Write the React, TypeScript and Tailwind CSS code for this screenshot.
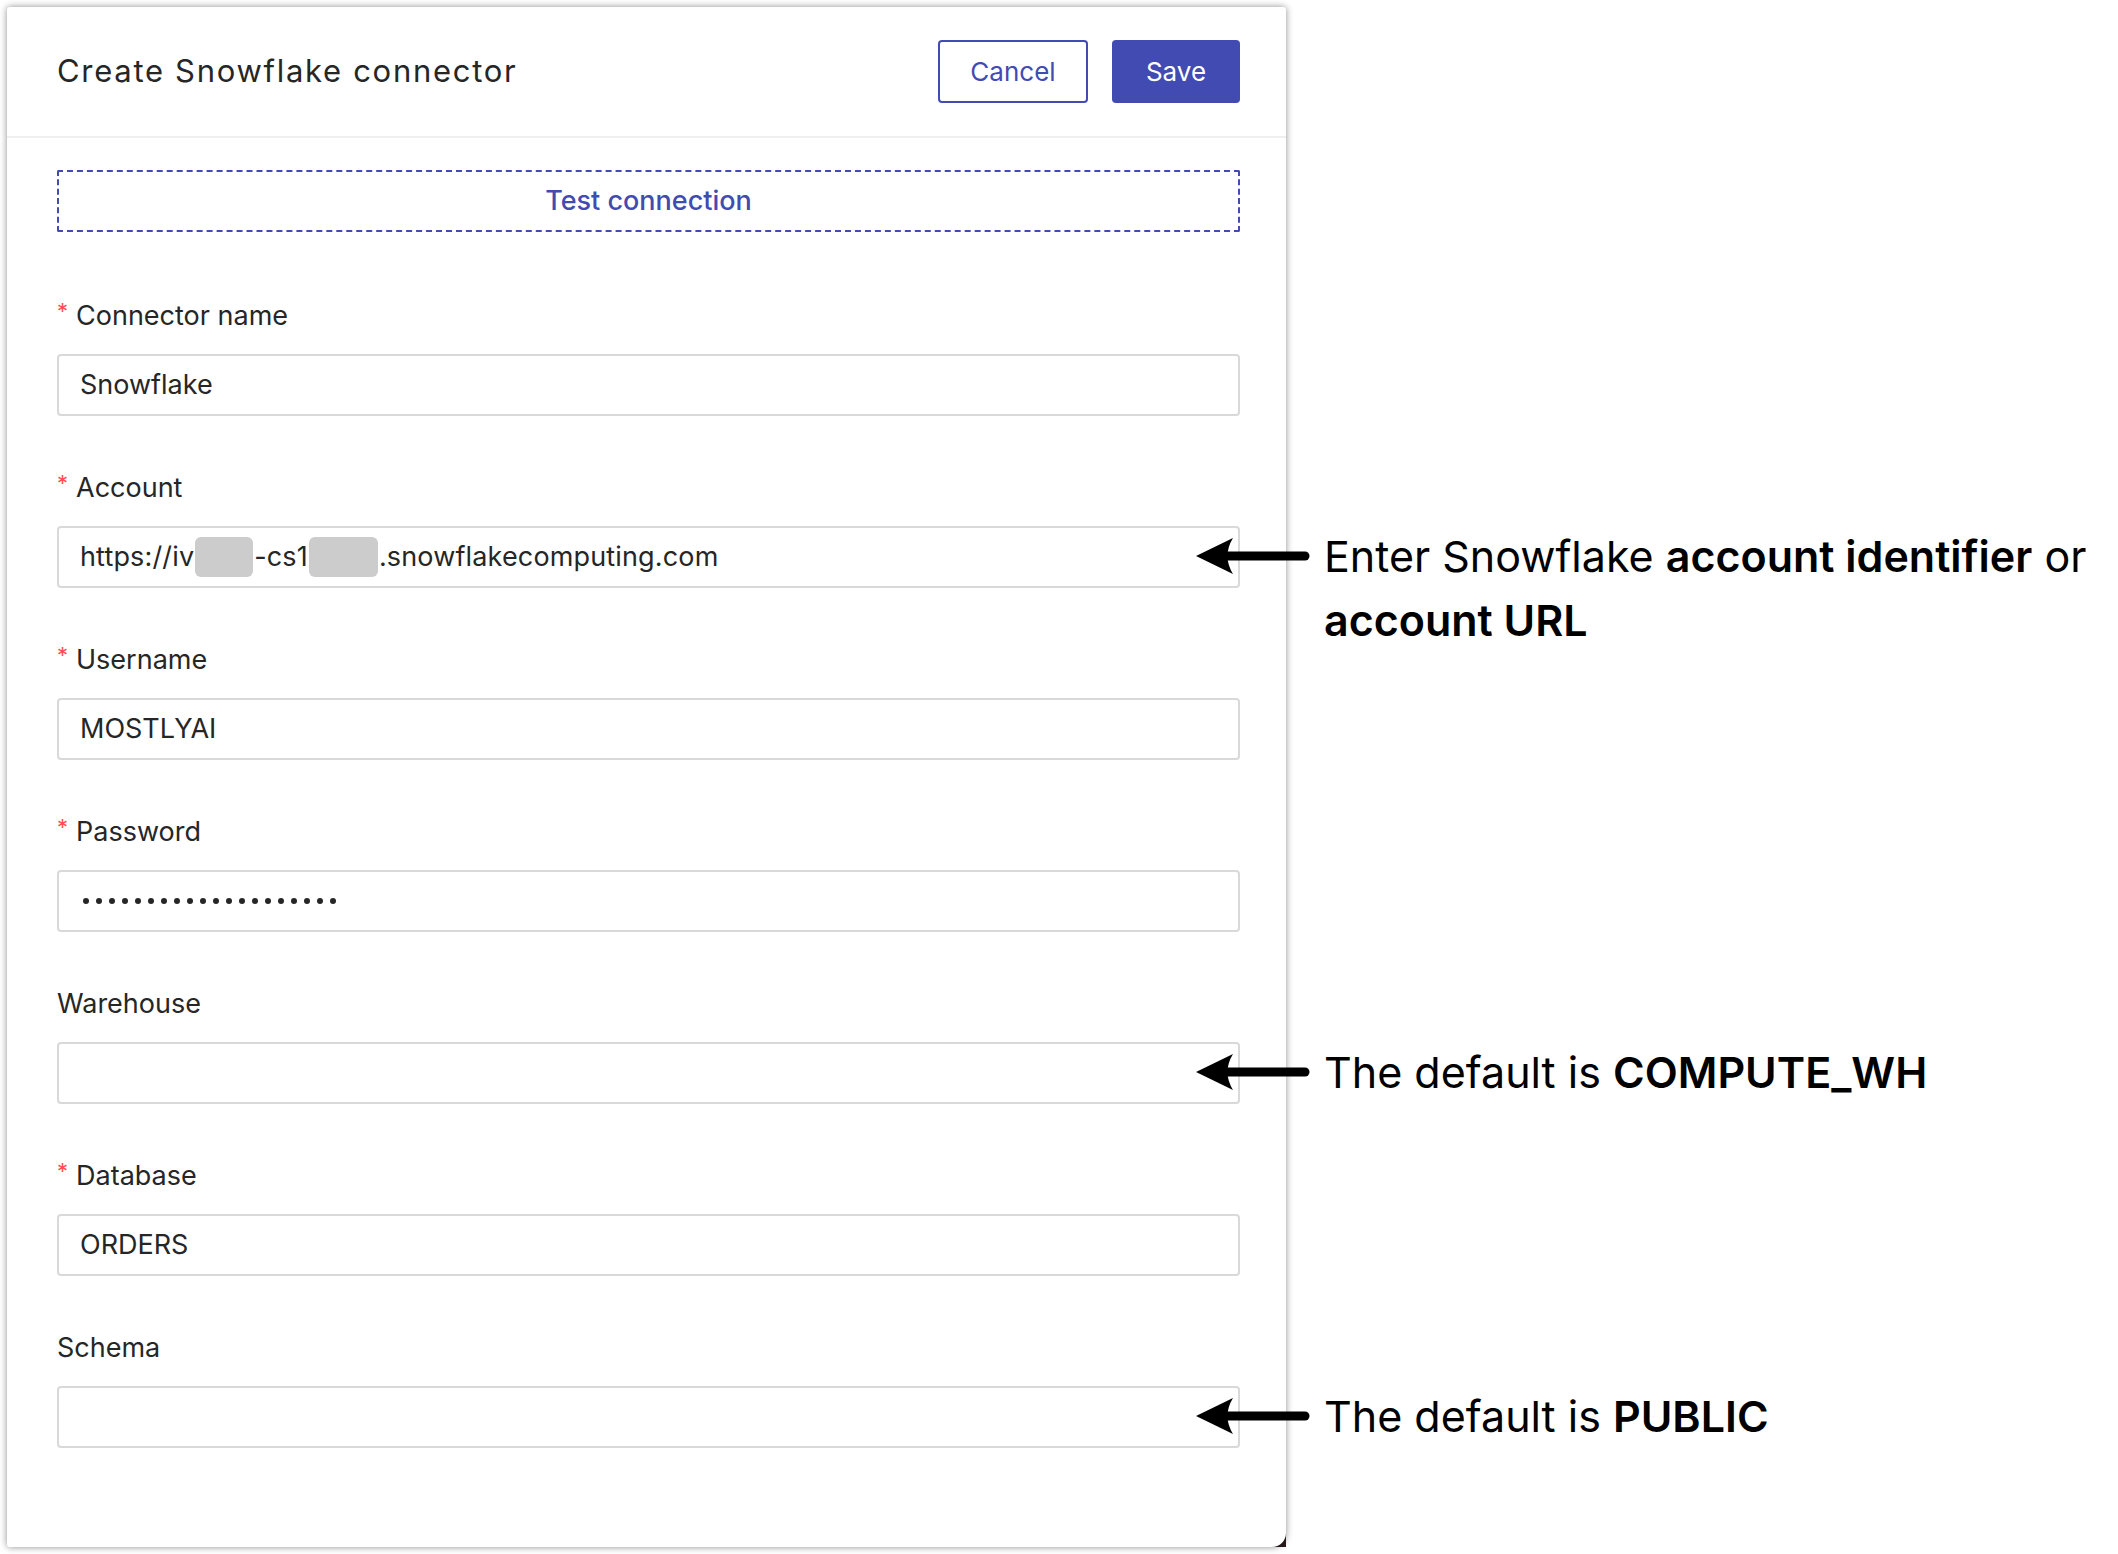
import React from 'react'

type Field = {
  label: string
  required?: boolean
  value?: React.ReactNode
  note?: React.ReactNode
}

function Arrow() {
  return (
    <svg width="118" height="40" viewBox="0 0 118 40" className="shrink-0 mt-[12px]">
      <line x1="30" y1="20" x2="111" y2="20" stroke="#000" strokeWidth="9" strokeLinecap="round" />
      <path d="M2 20 L39 2 Q28 20 39 38 Z" fill="#000" />
    </svg>
  )
}

function Note({ children }: { children: React.ReactNode }) {
  return (
    <div className="absolute left-[1135px] top-[-4px] flex items-start gap-[12px] whitespace-nowrap">
      <Arrow />
      <div className="text-[43px] leading-[64px] text-black">{children}</div>
    </div>
  )
}

const Masked = ({ w }: { w: string }) => (
  <span className={`inline-block h-[40px] align-middle rounded-[6px] bg-[#cccccc] mx-[1px] ${w}`} />
)

const fields: Field[] = [
  { label: 'Connector name', required: true, value: 'Snowflake' },
  {
    label: 'Account',
    required: true,
    value: (
      <span className="flex items-center tracking-[0.15px]">
        https://iv
        <Masked w="w-[58px]" />
        -cs1
        <Masked w="w-[69px]" />
        .snowflakecomputing.com
      </span>
    ),
    note: (
      <>
        Enter Snowflake <b className="font-semibold">account identifier</b> or
        <br />
        <b className="font-semibold">account URL</b>
      </>
    ),
  },
  { label: 'Username', required: true, value: 'MOSTLYAI' },
  {
    label: 'Password',
    required: true,
    value: (
      <span className="flex items-center gap-[7px] ml-[3px]" aria-label="password">
        {Array.from({ length: 20 }).map((_, i) => (
          <span key={i} className="w-[6px] h-[6px] rounded-full bg-[#262626]" />
        ))}
      </span>
    ),
  },
  {
    label: 'Warehouse',
    note: (
      <>
        The default is <b className="font-semibold">COMPUTE_WH</b>
      </>
    ),
  },
  { label: 'Database', required: true, value: 'ORDERS' },
  {
    label: 'Schema',
    note: (
      <>
        The default is <b className="font-semibold">PUBLIC</b>
      </>
    ),
  },
]

export default function App() {
  return (
    <div className="w-[2118px] h-[1554px] bg-white overflow-hidden pl-[7px] pt-[7px] font-['Inter',sans-serif] text-[#262626]">
      <div className="relative w-[1279px] h-[1540px]">
        {/* dark corner behind the rounded edge of the dialog */}
        <div className="absolute right-0 bottom-0 w-[14px] h-[14px] bg-[#2a1c1c]" />
        <div className="relative h-full bg-white rounded-[3px] rounded-br-[14px] shadow-[0_0_7px_rgba(0,0,0,0.45)]">
          {/* Header */}
          <div className="h-[131px] pl-[50px] pr-[46px] flex items-center justify-between border-b-2 border-[#efefef]">
            <h1 className="text-[31px] tracking-[1.7px] font-normal text-[#262626]">Create Snowflake connector</h1>
            <div className="flex items-center gap-[24px]">
              <button className="w-[150px] h-[63px] border-2 border-[#414bb2] rounded-[4px] text-[#414bb2] text-[26px]">
                Cancel
              </button>
              <button className="w-[128px] h-[63px] bg-[#414bb2] rounded-[4px] text-white text-[26px]">Save</button>
            </div>
          </div>

          {/* Body */}
          <div className="pl-[50px] pr-[46px] pt-[32px]">
            <button className="w-full h-[62px] border-2 border-dashed border-[#414bb2] rounded-[2px] flex items-center justify-center text-[#414bb2] text-[27px] font-medium">
              Test connection
            </button>

            <div className="mt-[64px] flex flex-col gap-[52px]">
              {fields.map((f) => (
                <div key={f.label} className="flex flex-col gap-[18px]">
                  <label className="h-[40px] flex items-center text-[27px]">
                    {f.required && (
                      <span className="text-[#ff4d4f] text-[22px] leading-none mr-[8px] relative top-[-5px]">*</span>
                    )}
                    {f.label}
                  </label>
                  <div className="relative h-[62px] border-2 border-[#d9d9d9] rounded-[4px] pl-[21px] flex items-center text-[27px]">
                    {f.value}
                    {f.note && <Note>{f.note}</Note>}
                  </div>
                </div>
              ))}
            </div>
          </div>
        </div>
      </div>
    </div>
  )
}
